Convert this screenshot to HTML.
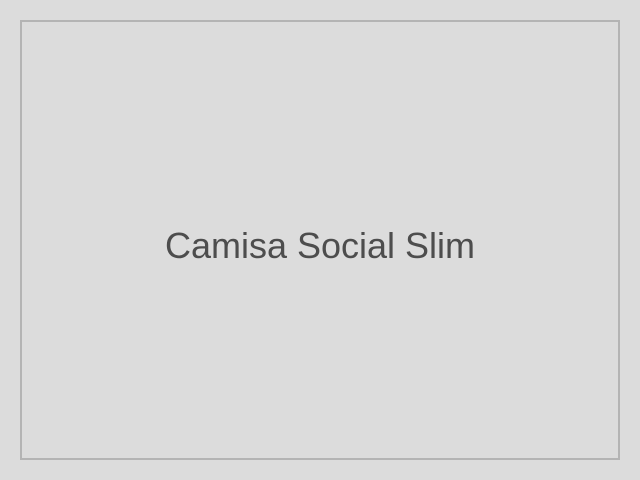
<!DOCTYPE html>
<html><head><style>
html,body{margin:0;padding:0;width:640px;height:480px;background:#dcdcdc;overflow:hidden}
.box{position:absolute;left:20px;top:20px;width:596px;height:436px;border:2px solid #b4b4b4;}
.t{position:absolute;left:0;top:226px;width:640px;text-align:center;font-family:"Liberation Sans",sans-serif;font-size:36px;color:#4d4d4d;line-height:40px}
</style></head><body>
<div class="box"></div>
<div class="t">Camisa Social Slim</div>
</body></html>
